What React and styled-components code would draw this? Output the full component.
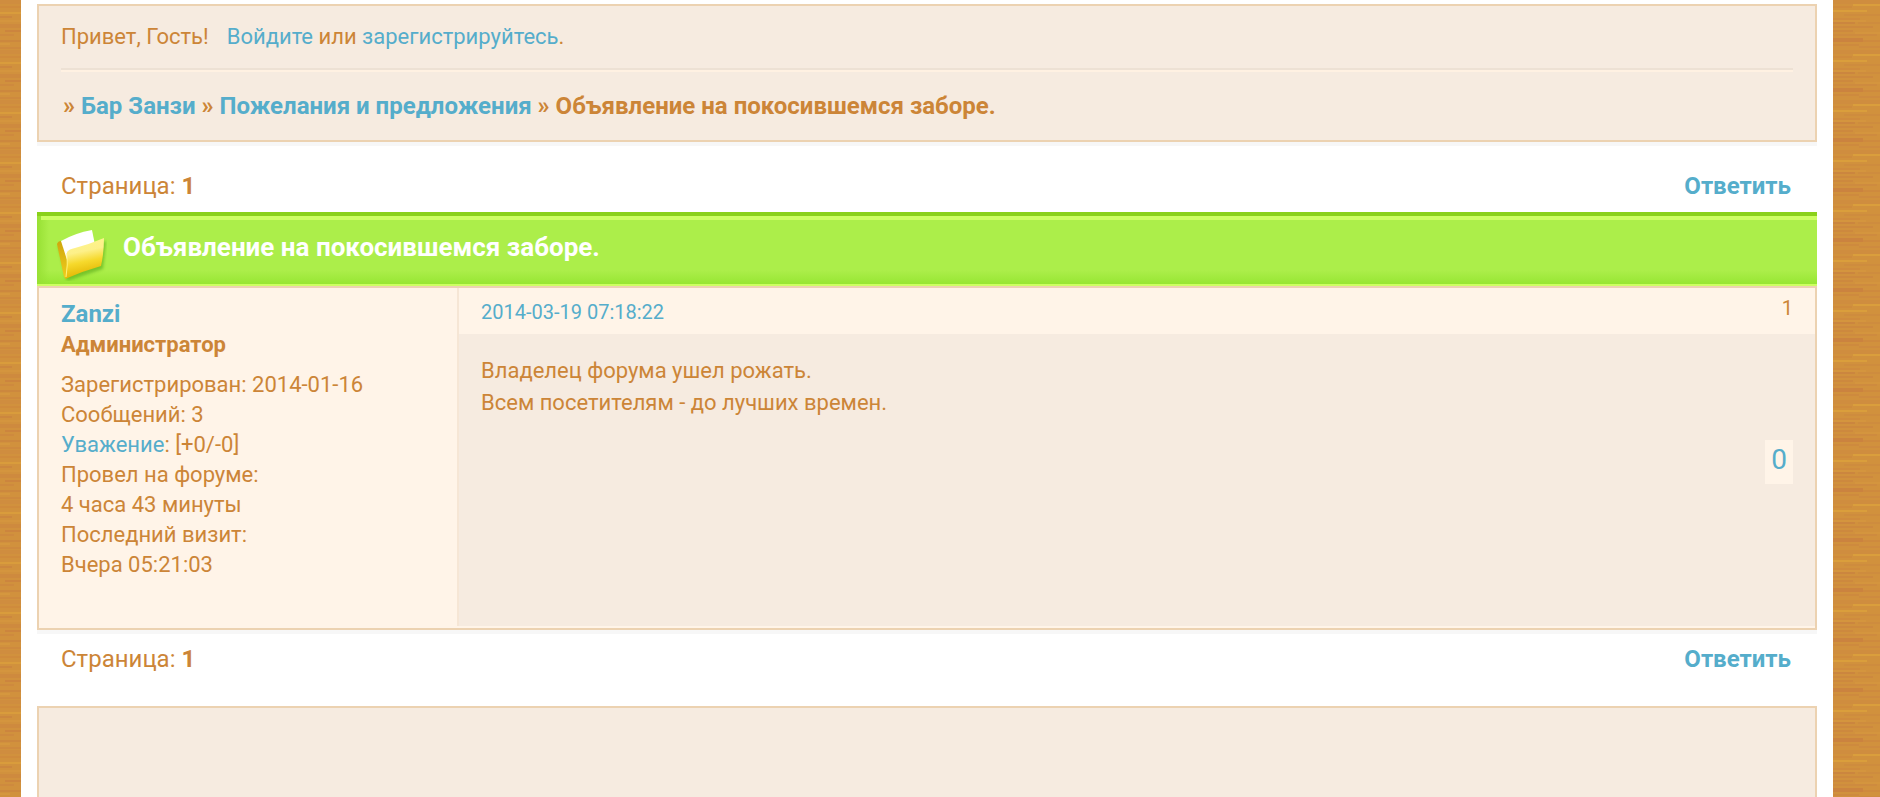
import React from 'react';
import styled, { createGlobalStyle } from 'styled-components';

const GlobalStyle = createGlobalStyle`
  *, *::before, *::after { box-sizing: border-box; }
  body {
    margin: 0;
    background: #d08f3e;
    color: #cc8537;
    font: 24px/30px Roboto, "Liberation Sans", sans-serif;
  }
  a { color: #55adcb; text-decoration: none; }
  a:hover { text-decoration: underline; }
  h1, h2, p, ul { margin: 0; padding: 0; font-weight: 400; }
  ul { list-style: none; }
`;

const Wood = styled.div`
  position: relative;
  min-height: 100vh;
  padding: 0 47px 0 21px;
`;

const Grain = styled.svg`
  position: absolute;
  inset: 0;
  width: 100%;
  height: 100%;
`;

const Page = styled.main`
  position: relative;
  min-height: 100vh;
  padding: 4px 16px 0;
  background: #fff;
`;

const Panel = styled.section`
  background: #f6ebe0;
  border: 2px solid #ecd2b1;
  box-shadow: 0 4px 0 #f7f7f7;
`;

const HeaderPanel = styled(Panel)`
  padding: 15px 22px 18px;
`;

const Welcome = styled.p`
  display: flex;
  gap: 18px;
  padding-bottom: 15px;
  border-bottom: 2px solid #ede1d4;
  font-size: 22px;
  line-height: 32px;
`;

const Crumbs = styled.nav`
  padding: 18px 2px 0;
  border-top: 2px solid #fff1e2;
  font-size: 24px;
  font-weight: 700;
  line-height: 32px;
`;

const PageBar = styled.div`
  display: flex;
  justify-content: space-between;
  align-items: center;
  padding: ${(p) => (p.$bottom ? '14px 26px 32px 24px' : '29px 26px 11px 24px')};
  line-height: 30px;
`;

const Reply = styled.a`
  font-weight: 700;
`;

const TitleBar = styled.header`
  display: flex;
  align-items: flex-start;
  gap: 16px;
  height: 74px;
  padding: 7px 20px 0 18px;
  border-top: 4px solid #8ad11a;
  border-bottom: 2px solid #cdfe63;
  background:
    linear-gradient(#cdfe63, #cdfe63) 4px 0 / 100% 4px no-repeat,
    linear-gradient(90deg, #98e034, rgba(172, 238, 74, 0) 12px),
    linear-gradient(#acee4a 80%, #97e633);
`;

const FolderIcon = styled.svg`
  width: 52px;
  height: 58px;
`;

const Title = styled.h1`
  padding-top: 8px;
  color: #fff;
  font-size: 26px;
  font-weight: 700;
  line-height: 32px;
`;

const Post = styled(Panel).attrs({ as: 'article' })`
  display: grid;
  grid-template-columns: 420px 1fr;
  min-height: 344px;
  padding-bottom: 2px;
  background: #fff4e8;
`;

const Author = styled.aside`
  padding: 10px 22px;
  border-right: 2px solid #f6e6d5;
  font-size: 22px;
`;

const AuthorName = styled.h2`
  font-size: 24px;
  font-weight: 700;
  line-height: 32px;
`;

const Rank = styled.p`
  margin-bottom: 10px;
  font-weight: 700;
  line-height: 30px;
`;

const PostMain = styled.div`
  display: flex;
  flex-direction: column;
`;

const PostHead = styled.div`
  display: flex;
  justify-content: space-between;
  padding: 6px 22px 4px;
  font-size: 20px;
  line-height: 36px;
`;

const PostNumber = styled.span`
  line-height: 28px;
`;

const PostBody = styled.div`
  flex: 1;
  padding: 21px 22px;
  background: #f6ebe0;
  font-size: 22px;
  line-height: 32px;
`;

const Rating = styled.div`
  display: flex;
  justify-content: flex-end;
  margin-top: 21px;
`;

const RatingLink = styled.a`
  padding: 0 6px 4px;
  background: #fff4e8;
  font-size: 28px;
  line-height: 40px;
`;

const FooterPanel = styled(Panel)`
  height: 120px;
  border-bottom: 0;
  box-shadow: none;
`;

const authorFacts = [
  <>Зарегистрирован: 2014-01-16</>,
  <>Сообщений: 3</>,
  <><a href="#respect">Уважение</a>: [+0/-0]</>,
  <>Провел на форуме:</>,
  <>4 часа 43 минуты</>,
  <>Последний визит:</>,
  <>Вчера 05:21:03</>,
];

// Streaks of one 150x50 plank tile: x, y, width, height, colour, opacity.
const streaks = [
  [0, 0, 150, 4, '#cb8440', 0.4],
  [53, 4, 60, 2, '#e0a63b', 0.8],
  [0, 6, 52, 2, '#cf8a3c', 1],
  [33, 10, 34, 2, '#e0a63b', 0.8],
  [0, 12, 21, 2, '#e0a63b', 0.7],
  [44, 14, 46, 2, '#c9803f', 0.4],
  [0, 16, 12, 2, '#c77a3f', 0.6],
  [33, 18, 27, 2, '#cb823f', 0.5],
  [0, 20, 66, 2, '#d99c3e', 0.5],
  [33, 22, 22, 2, '#c77c40', 0.7],
  [58, 22, 40, 2, '#c9803f', 0.4],
  [0, 24, 21, 4, '#c9803f', 0.5],
  [33, 26, 40, 2, '#c77c40', 0.5],
  [5, 30, 16, 2, '#c77640', 0.6],
  [33, 30, 20, 2, '#c9803f', 0.7],
  [55, 32, 40, 2, '#d99c3e', 0.5],
  [0, 34, 14, 2, '#c9803f', 0.6],
  [33, 34, 44, 2, '#c77c40', 0.4],
  [33, 38, 30, 4, '#c77640', 0.7],
  [63, 40, 30, 2, '#c9803f', 0.6],
  [0, 40, 21, 2, '#c77c40', 0.6],
  [0, 43, 10, 2, '#d99c3e', 0.7],
  [33, 44, 26, 2, '#c9803f', 0.5],
  [59, 46, 40, 2, '#c77c40', 0.4],
  [0, 47, 21, 2, '#c9803f', 0.5],
];

function WoodGrain() {
  return (
    <Grain aria-hidden="true">
      <defs>
        <pattern id="grain" width="150" height="50" patternUnits="userSpaceOnUse">
          <rect width="150" height="50" fill="#d1913d" />
          <g opacity="0.75">
            {streaks.map(([x, y, width, height, fill, opacity]) => (
              <rect key={`${x}-${y}`} {...{ x, y, width, height, fill, opacity }} />
            ))}
          </g>
        </pattern>
      </defs>
      <rect width="100%" height="100%" fill="url(#grain)" />
    </Grain>
  );
}

function Folder() {
  return (
    <FolderIcon viewBox="0 0 52 58" aria-hidden="true">
      <defs>
        <linearGradient id="front" x1="0" y1="0" x2="0.2" y2="1">
          <stop offset="0" stopColor="#fff68c" />
          <stop offset="0.4" stopColor="#fdf089" />
          <stop offset="0.65" stopColor="#f6d92c" />
          <stop offset="1" stopColor="#e2b400" />
        </linearGradient>
        <linearGradient id="back" x1="0" y1="0" x2="0" y2="1">
          <stop offset="0" stopColor="#cfa60c" />
          <stop offset="1" stopColor="#f0cc1c" />
        </linearGradient>
        <filter id="soft" x="-20%" y="-20%" width="140%" height="140%">
          <feGaussianBlur stdDeviation="1.5" />
        </filter>
      </defs>
      <path d="M3 22 L13 30 L51 18 L48 46 L12 58 Z" fill="#57a916" opacity="0.6" filter="url(#soft)" />
      <path d="M2 21 Q3 18 6 18 L14 30 L11 55 L9 54 Z" fill="url(#back)" />
      <path d="M6 18 Q20 10 37 7 L40 22 L13 40 Z" fill="#fff" />
      <path d="M12 29 Q14 26 20 25 Q35 21 49 15 Q49 30 46 43 Q28 48 10 56 Q13 42 12 29 Z" fill="url(#front)" />
      <path d="M12 30 Q13 42 11 54" fill="none" stroke="#fff27a" strokeWidth="1" />
    </FolderIcon>
  );
}

function Pager({ bottom }) {
  return (
    <PageBar $bottom={bottom}>
      <span>Страница: <strong>1</strong></span>
      <Reply href="#reply">Ответить</Reply>
    </PageBar>
  );
}

export default function App() {
  return (
    <>
      <GlobalStyle />
      <Wood>
        <WoodGrain />
        <Page>
          <HeaderPanel>
            <Welcome>
              <span>Привет, Гость!</span>
              <span><a href="#login">Войдите</a> или <a href="#register">зарегистрируйтесь</a>.</span>
            </Welcome>
            <Crumbs>
              » <a href="#home">Бар Занзи</a> » <a href="#wishes">Пожелания и предложения</a> » Объявление на покосившемся заборе.
            </Crumbs>
          </HeaderPanel>
          <Pager />
          <TitleBar>
            <Folder />
            <Title>Объявление на покосившемся заборе.</Title>
          </TitleBar>
          <Post>
            <Author>
              <AuthorName><a href="#zanzi">Zanzi</a></AuthorName>
              <Rank>Администратор</Rank>
              <ul>{authorFacts.map((f, i) => <li key={i}>{f}</li>)}</ul>
            </Author>
            <PostMain>
              <PostHead>
                <a href="#p1">2014-03-19 07:18:22</a>
                <PostNumber>1</PostNumber>
              </PostHead>
              <PostBody>
                <p>Владелец форума ушел рожать.<br />Всем посетителям - до лучших времен.</p>
                <Rating><RatingLink href="#vote">0</RatingLink></Rating>
              </PostBody>
            </PostMain>
          </Post>
          <Pager bottom />
          <FooterPanel />
        </Page>
      </Wood>
    </>
  );
}
